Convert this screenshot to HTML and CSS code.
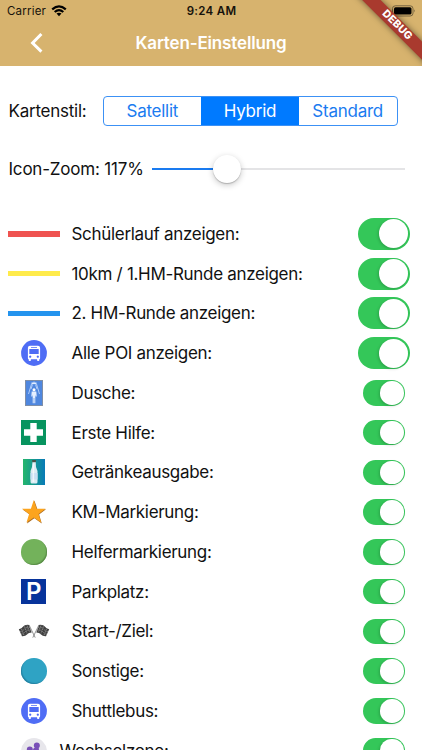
FILE: index.html
```html
<!DOCTYPE html>
<html lang="de">
<head>
  <meta charset="UTF-8">
  <meta name="viewport" content="width=device-width, initial-scale=1.0">
  <title>Karten-Einstellung</title>
  <link rel="stylesheet" href="styles.css">
</head>
<body>
  <svg class="defs" width="0" height="0">
    <symbol id="bus" viewBox="0 0 26 26">
      <circle cx="13" cy="13" r="12.9" fill="#4f6df5"/>
      <path fill="#fff" fill-rule="evenodd" d="M9 5.800h8q2 0 2.100 2v10.400q0 .9-.8 1v1q0 .7-.7.7h-.8q-.7 0-.7-.7v-1H9.900v1q0 .7-.7.7h-.8q-.7 0-.7-.7v-1q-.8-.1-.8-1V7.800q.1-2 2.100-2zM10 6.900v.8h6v-.8zM8.300 8.900v5h9.400v-5zM9.200 15.500a1.100 1.100 0 1 0 .01 0zM16.800 15.500a1.100 1.100 0 1 0 .01 0z"/>
    </symbol>
  </svg>

  <header class="header">
    <div class="status">
      <div class="carrier">
        <span>Carrier</span>
        <svg width="16" height="12" viewBox="0 0 16 12">
          <g fill="none" stroke="#000" stroke-width="2.2">
            <path d="M1.200 4.400Q8-1.600 14.800 4.400"/>
            <path d="M3.700 7Q8 3.300 12.300 7"/>
          </g>
          <path d="M5.500 8.600Q8 6.800 10.500 8.600L8 11.300z"/>
        </svg>
      </div>
      <div class="time">9:24 AM</div>
      <svg class="battery" width="24" height="12" viewBox="0 0 24 12">
        <rect x=".5" y=".8" width="20.500" height="10.200" rx="2.800" fill="none" stroke="#75633f"/>
        <rect x="2" y="2.300" width="17.500" height="7.200" rx="1.500"/>
        <path d="M22.300 4.300q1.200 1.600 0 3.200z" fill="#4e422a"/>
      </svg>
    </div>
    <div class="nav">
      <svg class="back" width="14" height="22" viewBox="0 0 14 22">
        <path d="M12.400 2L3.600 11l8.800 8.600" fill="none" stroke="#fff" stroke-width="3"/>
      </svg>
      <h1>Karten-Einstellung</h1>
    </div>
    <div class="debug"><span>DEBUG</span></div>
  </header>

  <main>
    <div class="style-row">
      <span class="style-label">Kartenstil:</span>
      <div class="segments">
        <div class="segment"><span>Satellit</span></div>
        <div class="segment active"><span>Hybrid</span></div>
        <div class="segment"><span>Standard</span></div>
      </div>
    </div>

    <div class="zoom-row">
      <span class="zoom-label">Icon-Zoom: 117%</span>
      <div class="slider"><div class="fill"></div><div class="thumb"></div></div>
    </div>

    <div class="list">
      <div class="row">
        <div class="icon"><div class="line red"></div></div>
        <span class="label">Schülerlauf anzeigen:</span>
        <div class="switch big"></div>
      </div>
      <div class="row">
        <div class="icon"><div class="line yellow"></div></div>
        <span class="label">10km / 1.HM-Runde anzeigen:</span>
        <div class="switch big"></div>
      </div>
      <div class="row">
        <div class="icon"><div class="line blue"></div></div>
        <span class="label">2. HM-Runde anzeigen:</span>
        <div class="switch big"></div>
      </div>
      <div class="row">
        <div class="icon"><svg width="26" height="26"><use href="#bus"/></svg></div>
        <span class="label">Alle POI anzeigen:</span>
        <div class="switch big"></div>
      </div>
      <div class="row">
        <div class="icon">
          <svg width="18" height="26" viewBox="0 0 18 26">
            <rect x=".5" y=".5" width="17" height="25" fill="#4f87df" stroke="#7f8ea6"/>
            <g fill="none" stroke="#c6dcff" stroke-width=".8">
              <path d="M6.500 4L3.500 14M11.500 4l3 10M7.500 4.500L6 9M10.500 4.500L12 9M9 1.500V4"/>
            </g>
            <path d="M6.500 2.500h5v1.600h-5z" fill="#e1edff"/>
            <circle cx="9" cy="9.700" r="1.500" fill="#fff"/>
            <path d="M6.700 11.500h4.600l.4 5h-1l-.4-2v8.800H9.300V18h-.6v5.300h-1v-8.800l-.4 2h-1z" fill="#e5efff"/>
          </svg>
        </div>
        <span class="label">Dusche:</span>
        <div class="switch"></div>
      </div>
      <div class="row">
        <div class="icon">
          <svg width="25" height="25" viewBox="0 0 25 25">
            <path fill="#07945f" d="M0 0h25v25H0z"/>
            <path fill="#fff" d="M9.300 3h6.400v6.300H22v6.400h-6.300V22H9.300v-6.300H3V9.300h6.300z"/>
          </svg>
        </div>
        <span class="label">Erste Hilfe:</span>
        <div class="switch"></div>
      </div>
      <div class="row">
        <div class="icon">
          <svg width="22" height="26" viewBox="0 0 22 26">
            <linearGradient id="bottle"><stop stop-color="#24b66b"/><stop offset="1" stop-color="#087ab7"/></linearGradient>
            <path fill="url(#bottle)" d="M0 0h22v26H0z"/>
            <path d="M9.500 2.500h3.200l.3 5.500 1.500 4v11q0 1.500-1.500 1.500H9q-1.500 0-1.500-1.500V12L9 8z" fill="#dcebf3"/>
            <path d="M7.500 14h7v6.500h-7z" fill="#c9dff3"/>
            <path d="M9.800 4.500h1.400v18.500H9.500z" fill="#fff" opacity=".65"/>
            <path d="M9.200 1h3.700v2.200H9.200z" fill="#4b5146"/>
          </svg>
        </div>
        <span class="label">Getränkeausgabe:</span>
        <div class="switch"></div>
      </div>
      <div class="row">
        <div class="icon">
          <svg width="26" height="26" viewBox="0 0 26 26">
            <path d="M13.400 1.600l3 8.600h8.600l-6.900 5.300 2.700 8.900-7.400-5.200-7.400 5.200 2.600-8.900L1.600 10.500h8.900z" fill="#a96b23"/>
            <path d="M12.800 1l2.900 8.700h8.900l-7.100 5.300 2.700 8.500-7.400-5.100-7.300 5.100 2.600-8.500L1 9.700h8.900z" fill="#fca41e"/>
          </svg>
        </div>
        <span class="label">KM-Markierung:</span>
        <div class="switch"></div>
      </div>
      <div class="row">
        <div class="icon"><div class="dot green"></div></div>
        <span class="label">Helfermarkierung:</span>
        <div class="switch"></div>
      </div>
      <div class="row">
        <div class="icon"><div class="parking"><span>P</span></div></div>
        <span class="label">Parkplatz:</span>
        <div class="switch"></div>
      </div>
      <div class="row">
        <div class="icon">
          <svg width="32" height="14" viewBox="0 0 32 14">
            <defs>
              <g id="flag">
                <path d="M.8 5.200Q3.800 4.400 5.200 2.400T11 .9l2.700 7.600Q10.500 8.500 9 10.500T4 12.300z" fill="#404040"/>
                <path d="M2 7.800Q5 7 6.500 5T12 3.500M3 10.300Q6 9.500 7.500 7.500T13 6M3.500 5l2.800 7M6.500 2.500l2.800 7.500M9 1.500l2.800 7" fill="none" stroke="#b4b4b4" stroke-width=".6" stroke-dasharray="1.500 1"/>
                <path d="M11 .9l6.200 12.700" stroke="#777" stroke-width=".8"/>
              </g>
            </defs>
            <use href="#flag"/>
            <use href="#flag" transform="matrix(-1 0 0 1 32 0)"/>
          </svg>
        </div>
        <span class="label">Start-/Ziel:</span>
        <div class="switch"></div>
      </div>
      <div class="row">
        <div class="icon"><div class="dot teal"></div></div>
        <span class="label">Sonstige:</span>
        <div class="switch"></div>
      </div>
      <div class="row">
        <div class="icon"><svg width="26" height="26"><use href="#bus"/></svg></div>
        <span class="label">Shuttlebus:</span>
        <div class="switch"></div>
      </div>
      <div class="row last">
        <div class="icon">
          <svg width="26" height="26" viewBox="0 0 26 26">
            <circle cx="13" cy="13" r="12.900" fill="#e7e6eb"/>
            <g fill="#7950b7">
              <circle cx="15.800" cy="7.400" r="3"/>
              <circle cx="8.800" cy="11.400" r="3"/>
              <path d="M12.800 10h5v4h-7z"/>
              <path d="M5 19q0-5 4-5t4 5zM13 16q0-5 3-5t4 5z"/>
            </g>
          </svg>
        </div>
        <span class="label">Wechselzone:</span>
        <div class="switch"></div>
      </div>
    </div>
  </main>
</body>
</html>
```

FILE: styles.css
```css
* {
  box-sizing: border-box;
}
body {
  margin: 0;
  height: 750px;
  overflow: hidden;
  background: #fff;
  color: #111;
  font-family: Inter, "Liberation Sans", sans-serif;
  font-size: 17px;
}
svg {
  display: block;
}
.defs {
  position: absolute;
}

/* header */
.header {
  position: relative;
  height: 65.5px;
  background: #d7b36e;
  overflow: hidden;
}
.status {
  display: grid;
  grid-template-columns: 1fr auto 1fr;
  align-items: center;
  height: 22px;
  padding: 0 6px 0 7px;
  font-size: 11.5px;
  color: #16120b;
}
.carrier {
  display: flex;
  align-items: center;
  gap: 5px;
}
.carrier span {
  letter-spacing: 0.2px;
}
.time {
  font-weight: 600;
  letter-spacing: 0.3px;
}
.battery {
  justify-self: end;
}
.nav {
  display: grid;
  grid-template-columns: 30px 1fr 30px;
  align-items: center;
  height: 42px;
  padding: 0 29px;
}
.nav h1 {
  margin: 0;
  text-align: center;
  color: #fff;
  font-size: 17px;
  font-weight: 600;
  letter-spacing: -0.15px;
}
.debug {
  position: absolute;
  top: 18.5px;
  left: 347px;
  width: 100px;
  height: 12.5px;
  transform: rotate(45deg);
  background: #a93a2e;
  box-shadow: 0 0 6px rgba(0,0,0,0.5);
  color: #fff;
  font-size: 10.5px;
  font-weight: 800;
  line-height: 12.5px;
  letter-spacing: 0.2px;
  text-align: center;
}

/* map style and zoom */
.style-row {
  display: flex;
  align-items: center;
  height: 30px;
  margin-top: 30px;
  padding-left: 8.5px;
}
.style-label {
  width: 94px;
  letter-spacing: -0.25px;
}
.segments {
  display: flex;
  width: 295px;
  height: 30px;
  border: 1px solid #3c91f5;
  border-radius: 4px;
  overflow: hidden;
}
.segment {
  display: flex;
  flex: 1;
  align-items: center;
  justify-content: center;
  color: #1a7bf0;
  letter-spacing: -0.25px;
}
.segment.active {
  background: #007aff;
  color: #fff;
}
.zoom-row {
  display: flex;
  align-items: center;
  height: 40px;
  margin-top: 23.5px;
  padding-left: 8.5px;
}
.zoom-label {
  width: 143.5px;
  white-space: nowrap;
  letter-spacing: -0.2px;
}
.slider {
  display: flex;
  align-items: center;
  width: 253px;
  height: 30px;
  background: linear-gradient(#e4e4e6, #e4e4e6) center / 100% 2px no-repeat;
}
.fill {
  width: 61px;
  height: 2px;
  background: #1a7bf0;
}
.thumb {
  width: 28px;
  height: 28px;
  border-radius: 50%;
  background: #fff;
  box-shadow: 0 2px 6px rgba(0,0,0,0.22), 0 1px 1px rgba(0,0,0,0.2);
}

/* list */
.list {
  margin-top: 25.1px;
}
.row {
  display: flex;
  align-items: center;
  height: 39.75px;
  padding: 0 12.5px 0 8px;
}
.icon {
  display: flex;
  flex: none;
  justify-content: center;
  width: 51.5px;
  margin-right: 12px;
}
.last .icon {
  margin-right: 0;
}
.label {
  flex: 1;
  white-space: nowrap;
  letter-spacing: -0.31px;
}
.line {
  width: 51.5px;
  height: 5.5px;
}
.red {
  background: #ef5350;
}
.yellow {
  background: #ffeb4b;
}
.blue {
  background: #2494ee;
}
.dot {
  width: 25.5px;
  height: 25.5px;
  border-radius: 50%;
}
.green {
  background: #73b25b;
  box-shadow: inset -1px -1px 1px #5a8d48;
}
.teal {
  background: #2fa3c4;
  box-shadow: inset 1px -1px 1px #2582a2;
}
.parking {
  width: 25px;
  height: 25px;
  background: #07339b;
  color: #fff;
  font-size: 24px;
  font-weight: 600;
  line-height: 25px;
  text-align: center;
}
.switch {
  display: flex;
  flex: none;
  align-items: center;
  justify-content: flex-end;
  width: 42px;
  height: 25.5px;
  margin-right: 5px;
  padding: 1px;
  border-radius: 16px;
  background: #34c759;
}
.switch::after {
  content: "";
  width: 23.5px;
  height: 23.5px;
  border-radius: 50%;
  background: #fff;
  box-shadow: -1px 1px 3px rgba(0,0,0,0.18);
}
.switch.big {
  width: 52px;
  height: 32px;
  margin-right: 0;
  padding: 1.5px;
}
.switch.big::after {
  width: 29px;
  height: 29px;
}
```
